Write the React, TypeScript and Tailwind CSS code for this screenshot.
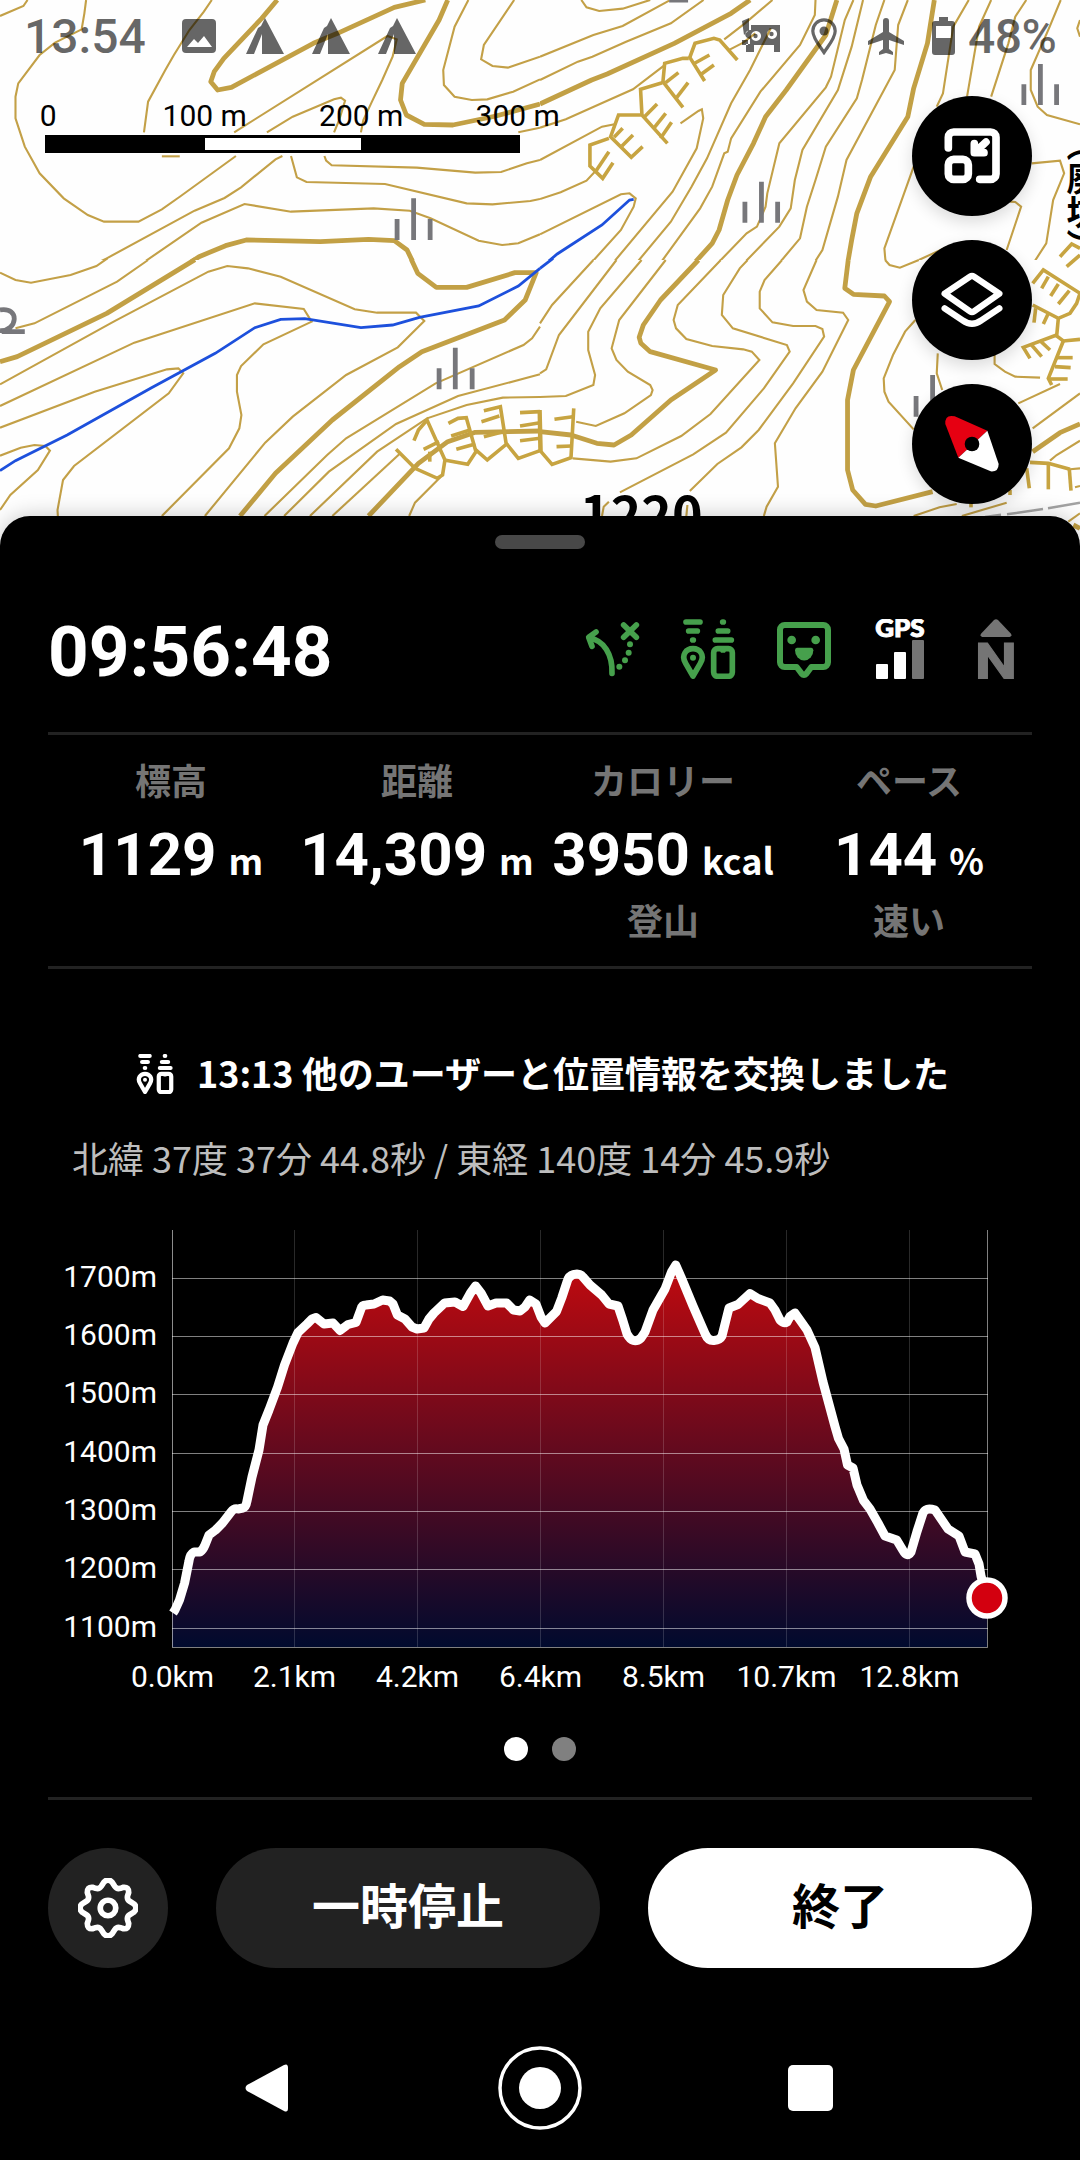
import type { ReactNode } from 'react';

type MapTile = {
    transform: string;
    clip?: string;
    thin: string[];
    bold?: string[];
    cliff?: string[];
    stream?: string;
    symbols?: string[];
};

// Each tile has its own unit grid, scaled down onto the map
const TILES: MapTile[] = [
    {
        transform: 'translate(0 0) scale(.34439 .33333)',
        clip: 'url(#upper-row)',
        thin: [
            '0,48 68,18 80,0',
            '250,0 245,40 237,88 160,128 115,165 53,250 45,290 45,355 72,440 115,520 185,595 255,645 302,665 402,665 470,628 525,588 685,468',
            '680,397 1125,108 1152,118 1140,170 1110,240 1080,305 1055,360 1048,397',
            '615,0 592,35 550,90 505,165 480,210 430,305 418,397',
            '470,469 522,469',
            '775,397 850,350 970,298 990,293 1002,302 985,360 970,397',
            '240,810 310,775 565,632 652,594 700,562 800,478 820,468',
            '385,810 585,668 710,612 845,635 1085,625 1190,632 1250,655 1390,722 1458,735 1505,730 1568,703',
            '845,468 862,532 890,546 1118,552 1355,610 1430,613 1540,603 1568,597',
            '942,468 947,482 963,496 1210,503 1380,518 1455,516 1530,490 1568,480',
            '1360,0 1320,80 1287,210 1289,255 1320,290 1370,300 1415,298 1490,275 1568,238',
            '1493,0 1405,135 1397,178 1430,198 1475,203 1568,170',
            '1505,397 1568,383',
        ],
        bold: [
            '805,0 760,55 650,175 622,215 612,245 632,270 672,262 910,130 980,100 1145,22 1235,0',
            '520,810 578,770 655,737 715,720 930,725 1070,718 1145,722 1182,750 1210,810',
            '1300,0 1275,60 1168,250 1163,300 1180,345 1232,373 1315,375 1440,348 1568,312',
        ],
        symbols: ['M1153 657V720M1201 595V720M1249 657V720'],
    },
    {
        transform: 'translate(540 0) scale(.34439 .33333)',
        clip: 'url(#upper-row)',
        thin: [
            '0,170 155,105 240,78 375,2',
            '120,0 135,22 172,33 240,26 320,0',
            '0,240 110,185 152,170 250,125 380,70 475,0',
            '0,383 75,358 200,300 270,268 360,197',
            '0,480 180,380 220,372',
            '0,597 60,577 135,542 162,512',
            '535,118 595,70 675,0',
            '545,152 590,128 625,100',
            '0,703 235,583 260,580 278,595 272,620 235,690 130,810',
            '408,370 460,333 470,328 474,355 455,445 385,575 195,810',
            '670,85 610,210 555,310 485,475 440,560 380,665 265,808',
            '800,0 798,45 755,135 640,275 555,415 545,455 535,460 500,560 465,625 335,810',
            '910,0 885,60 845,230 830,262 695,430 660,580 655,620 630,680 600,700 497,810',
            '938,0 905,140 865,270 762,450 740,540 728,625 695,680 573,810',
            '1000,0 975,75 935,240 920,295 830,440 800,540 775,620 755,715 678,810',
            '1068,0 1040,75 1030,210 890,480 865,590 820,750 783,810',
            '1245,0 1200,80 1170,280 1152,320',
            '1310,0 1275,80 1240,290',
            '1412,0 1380,50 1360,130 1310,290',
            '1512,0 1480,80 1425,210 1425,270 1445,320 1472,345 1568,373',
            '1085,500 1000,745 1002,770 1003,780',
            '1100,780 1190,737',
            '1428,490 1510,482 1522,520 1490,600 1470,730 1420,810',
            '1365,605 1380,606 1397,620 1355,750',
            '1568,60 1560,85 1568,110',
        ],
        bold: [
            '0,312 150,240 195,222 390,130 555,40 610,0',
            '862,0 830,105 715,270 655,350 620,430 572,525 545,600 520,690 500,730 430,810',
            '1145,0 1125,130 1085,265 1068,350 960,530 920,640 905,720 890,810',
        ],
        cliff: [
            '573,180 522,120 505,115 450,130 435,172 478,243',
            '445,192 492,165',
            '465,225 505,195',
            '432,175 415,175 362,190 357,245 415,322',
            '365,248 402,218',
            '395,295 430,248',
            '355,248 292,268 296,345 370,430',
            '302,352 340,312',
            '330,385 365,340',
            '350,415 382,367',
            '293,345 228,345 205,410 265,472 298,440',
            '215,412 240,385',
            '238,438 270,405',
            '200,415 145,435 145,498 182,535 212,488',
            '163,512 200,455',
        ],
        stream: '0,805 50,762 180,675 260,600 272,598',
        symbols: ['M595 605V668M643 545V668M690 605V668M1405 253V315M1453 192V315M1500 253V315M375 0H430'],
    },
    {
        transform: 'translate(0 260) scale(.34439 .33333)',
        thin: [
            '0,38 45,60 90,68 205,45 280,18 312,-5',
            '45,205 100,190 340,65 430,0',
            '0,373 330,185 605,35 660,18 720,25 815,50 1030,148 1095,158 1208,158 1232,183 1155,262 1005,345 850,470 770,548 595,768',
            '0,438 390,248 740,130 882,147 905,185 765,253 700,318 688,345 688,395 701,465 695,505 665,565 470,768',
            '0,503 275,395 485,328 518,325 532,340 490,400 215,618 183,660 167,750 168,768',
            '0,587 60,563 100,555 132,558 145,572 110,630 30,705 0,750',
            '1568,200 1545,235 1520,255 1265,370 1005,535 950,585 768,768',
            '1568,343 1330,408 1150,492 955,635 825,768',
            '1568,411 1460,413 1355,435 1240,475 1095,575 900,768',
            '1160,582 965,768',
            '1280,650 1205,728 1188,768',
        ],
        bold: [
            '0,305 50,290 310,160 566,-1',
            '1194,-2 1213,40 1267,82 1355,82 1495,38 1557,38 1525,120 1465,180 1225,275 1160,320 965,480 800,640 697,768',
            '1070,768 1215,610 1300,545 1380,517 1568,513',
        ],
        cliff: [
            '1150,568 1205,625 1270,655 1285,645 1292,600 1240,480 1215,510 1202,542',
            '1230,568 1275,545',
            '1248,605 1248,575',
            '1290,600 1358,613 1382,575 1354,473 1330,475 1302,490',
            '1310,528 1365,510',
            '1325,568 1380,552',
            '1380,568 1415,600 1470,553 1453,440 1405,452',
            '1398,485 1450,468',
            '1405,530 1455,517',
            '1470,550 1505,595 1568,572',
            '1510,458 1568,455',
            '1510,498 1568,488',
            '1510,542 1568,535',
            '1566,450 1568,570',
        ],
        stream: '0,632 45,602 195,525 440,383 625,280 740,203 815,178 885,176 1048,203 1140,195 1218,172 1390,138 1505,78 1568,25',
        symbols: ['M1275 325V388M1322 263V388M1371 325V388', 'M0 150C60 140 50 215 0 212M5 215H72'],
    },
    {
        transform: 'translate(540 260) scale(.34439 .33333)',
        thin: [
            '0,190 35,135 155,0',
            '0,340 18,328 55,225 222,0',
            '0,411 75,408 155,375 160,345 140,270 140,215 175,145 295,0',
            '365,0 230,180 208,265 222,300 255,335 320,375 327,390 322,405 245,460 162,498 105,485',
            '525,0 400,135 388,180 395,205 425,237 500,258 590,268 615,275 637,300 495,462 410,528 280,595 205,605 95,595',
            '603,0 580,25 532,105 528,165 560,205 717,255 725,275 650,385 540,518 445,583 232,697',
            '703,0 652,60 638,95 638,145 675,187 735,198 800,198 820,207 825,230 735,370 635,510 585,562 515,612 435,693',
            '803,0 765,90 775,125 803,150 880,158 895,180 820,335 742,445 682,550 691,680 658,740 650,768',
            '1002,0 1015,15 1045,23 1100,0',
            '1090,180 1060,215 1025,285 998,355 1000,395 1012,425 1085,508',
            '1155,280 1152,340 1168,390',
            '1320,285 1320,312 1350,335 1380,350 1452,353',
            '180,768 185,740 200,725',
            '428,735 425,768',
            '1085,768 1160,742 1210,732',
            '1225,768 1355,728',
        ],
        bold: [
            '0,515 90,525 165,550 215,555 265,525 380,420 510,330 320,275 293,250 288,232 300,195 350,120 460,0',
            '895,0 885,85 910,103 1000,108 1015,125 910,330 893,420 893,630 908,690 945,733 975,738 1140,695',
        ],
        cliff: ['0,450 3,575 35,613 90,593 98,445', '42,478 95,470', '48,560 92,558'],
        stream: '0,25 38,-5',
        symbols: ['M1092 408V470M1140 345V470'],
    },
    {
        transform: 'translate(900 120) scale(.33333)',
        thin: [
            '355,850 480,792',
            '398,925 540,820',
            '450,1022 470,1005 540,962',
            '510,1048 540,1045',
            '505,1205 540,1180',
            '525,1102 540,1098',
        ],
        bold: ['398,995 480,938 540,912', '520,1215 540,1225'],
        cliff: [
            '390,1027 445,1030 510,1048',
            '380,1045 388,1105',
            '445,1030 445,1108',
            '508,1048 513,1112',
            '480,410 515,372 540,385',
            '500,440 540,405',
            '398,490 430,450 540,520 530,550 510,580 475,595 398,555',
            '425,505 445,470',
            '452,528 475,492',
            '475,552 508,512',
            '402,608 407,565',
            '430,612 444,582',
            '475,595 470,648 490,663 540,658',
            '470,645 370,682 390,715',
            '392,672 425,710',
            '420,662 450,690',
            '490,663 445,775 455,795',
            '470,713 518,713',
            '465,740 512,743',
            '445,777 503,777',
            '213,1150 213,1162',
            '330,1110 330,1125',
        ],
    },
];

function TopoMap() {
    return (
        <svg className="absolute inset-0" width="1080" height="546" viewBox="0 0 1080 546" fill="none">
            <clipPath id="upper-row">
                <rect width="1568" height="780" />
            </clipPath>
            {TILES.map((tile) => (
                <g key={tile.transform} transform={tile.transform} clipPath={tile.clip}>
                    {tile.thin.map((p) => (
                        <polyline key={p} points={p} stroke="#c3a047" strokeWidth="2.1" vectorEffect="non-scaling-stroke" />
                    ))}
                    {tile.bold?.map((p) => (
                        <polyline key={p} points={p} stroke="#c2a045" strokeWidth="4.8" strokeLinejoin="round" vectorEffect="non-scaling-stroke" />
                    ))}
                    {tile.cliff?.map((p) => (
                        <polyline key={p} points={p} stroke="#c7a441" strokeWidth="3.6" vectorEffect="non-scaling-stroke" />
                    ))}
                    {tile.stream && (
                        <polyline points={tile.stream} stroke="#1d50dc" strokeWidth="2.8" vectorEffect="non-scaling-stroke" />
                    )}
                    {tile.symbols?.map((d) => (
                        <path key={d} d={d} stroke="#77777b" strokeWidth="4.8" vectorEffect="non-scaling-stroke" />
                    ))}
                </g>
            ))}
            <path d="M985 517L1001 514.7M1007 514.3L1043 509M1048 508.3L1080 502.7" stroke="#a3a3a3" strokeWidth="2.4" />
        </svg>
    );
}

function Tent() {
    return (
        <svg className="ml-[28px]" width="38" height="36" viewBox="0 0 38 36" fill="currentColor">
            <path d="M15 8L19 0L38 36H16V16L8 36H0L12 10Z" />
        </svg>
    );
}

function StatusBar() {
    return (
        <div className="absolute inset-x-0 top-0 flex h-[72px] items-center px-[24px] text-black/60">
            <span className="w-[121px] pt-[2px] text-[48px] leading-none font-medium">13:54</span>
            <svg className="ml-[37px]" width="34" height="34" viewBox="0 0 34 34" fill="currentColor" fillRule="evenodd">
                <path d="M4 0H30a4 4 0 0 1 4 4V30a4 4 0 0 1-4 4H4a4 4 0 0 1-4-4V4a4 4 0 0 1 4-4ZM5 28H30L22 17L16 24L12 20Z" />
            </svg>
            <div className="ml-[2px] flex">
                <Tent />
                <Tent />
                <Tent />
            </div>
            <div className="ml-auto flex items-center">
                <svg width="38" height="36" viewBox="0 0 38 36" fill="currentColor" fillRule="evenodd">
                    <path d="M0 3L7 0V12L2 17ZM0 22H6V27H0ZM9 7H38V34H32V27H12V34H4V26H8V21C1 20 2 12 9 12ZM14 13a5 5 0 1 0 .1 0ZM30 11a5 5 0 1 0 .1 0Z" />
                    <circle cx="13.5" cy="18" r="2.2" />
                    <circle cx="29.5" cy="16" r="2.2" />
                </svg>
                <svg className="ml-[31px]" width="26" height="37" viewBox="0 0 26 37" fill="none" stroke="currentColor" strokeWidth="3.2">
                    <path d="M13 34.5C8 27 1.8 20 1.8 13a11.2 11.2 0 0 1 22.4 0C24.2 20 18 27 13 34.5Z" />
                    <circle cx="13" cy="13" r="4.5" fill="currentColor" stroke="none" />
                </svg>
                <svg className="ml-[31px]" width="36" height="37" viewBox="0 0 36 37" fill="currentColor">
                    <path d="M18 0a3 3 0 0 1 3 3V14L36 23V27L21 22V31L25 34V37L18 35L11 37V34L15 31V22L0 27V23L15 14V3a3 3 0 0 1 3-3Z" />
                </svg>
                <svg className="ml-[28px]" width="23" height="38" viewBox="0 0 23 38" fill="currentColor" fillRule="evenodd">
                    <path d="M7 0H16V4H20a3 3 0 0 1 3 3V35a3 3 0 0 1-3 3H3a3 3 0 0 1-3-3V7a3 3 0 0 1 3-3H7ZM4 9V21H19V9Z" />
                </svg>
                <span className="ml-[13px] w-[88px] pt-[2px] text-[48px] leading-none font-medium tracking-[-0.5px]">48%</span>
            </div>
        </div>
    );
}

function ScaleBar() {
    return (
        <div className="absolute left-[-30px] top-[97px]">
            <div className="grid grid-cols-4 w-[626px] text-center text-[30px] leading-[37px] text-black">
                {['0', '100 m', '200 m', '300 m'].map((label) => (
                    <span key={label}>{label}</span>
                ))}
            </div>
            <div className="ml-[75px] flex h-[20px] w-[475px] items-center bg-white">
                <div className="flex h-[18px] w-full justify-center bg-black py-[3px]">
                    <div className="w-[156px] bg-white" />
                </div>
            </div>
        </div>
    );
}

function MapButton({ label, children }: { label: string; children: ReactNode }) {
    return (
        <button aria-label={label} className="size-[120px] rounded-full bg-black shadow-[0_6px_16px_rgba(0,0,0,0.14)]">
            <svg width="120" height="120" viewBox="0 0 360 360" fill="none" stroke="#fff" strokeLinecap="round" strokeLinejoin="round">
                {children}
            </svg>
        </button>
    );
}

function ExchangeIcon({ size, stroke = 17 }: { size: number; stroke?: number }) {
    return (
        <svg width={size} height={size} viewBox="0 0 180 180" fill="none" stroke="currentColor" strokeWidth={stroke} strokeLinecap="round" strokeLinejoin="round">
            <path d="M24 9H66M32 36H58M44 63H46M134 9H136M121 36H149M112 63H160" />
            <path d="M45 171L23 133C8 108 25 89 45 89S82 108 67 133Z" />
            <circle cx="45" cy="116" r="9" fill="currentColor" stroke="none" />
            <rect x="107" y="89" width="56" height="83" rx="12" />
            <path d="M124 92H146L141 101H129Z" fill="currentColor" stroke="none" />
        </svg>
    );
}

function StatusIcons() {
    return (
        <div className="flex gap-[36px] text-[#46a04c]">
            <svg width="60" height="60" viewBox="0 0 180 180" fill="none" stroke="currentColor" strokeWidth="17" strokeLinecap="round" strokeLinejoin="round">
                <path d="M125 18L163 55M163 18L125 55" />
                <path d="M42 39L20 55L30 82M22 57C66 64 92 106 90 163" />
                <g fill="currentColor" stroke="none">
                    <circle cx="112" cy="143" r="9" />
                    <circle cx="129" cy="124" r="9" />
                    <circle cx="140" cy="101" r="9" />
                    <circle cx="144" cy="76" r="9" />
                </g>
            </svg>
            <ExchangeIcon size={60} />
            <svg width="60" height="60" viewBox="0 0 180 180" fill="none" stroke="currentColor" strokeWidth="18" strokeLinejoin="round">
                <path d="M32 18H148a14 14 0 0 1 14 14V130a14 14 0 0 1-14 14H112L97 164q-7 8-14 0L68 144H32a14 14 0 0 1-14-14V32a14 14 0 0 1 14-14Z" />
                <g fill="currentColor" stroke="none">
                    <circle cx="53" cy="63" r="13" />
                    <circle cx="125" cy="63" r="13" />
                    <path d="M69 86H112q6 0 6 8a27 30 0 0 1-55 0q0-8 6-8Z" />
                </g>
            </svg>
            <svg width="60" height="60" viewBox="0 0 180 180">
                <text x="16" y="53" fontSize="71" fontWeight="900" textLength="148" lengthAdjust="spacingAndGlyphs" fill="#fff" stroke="#fff" strokeWidth="3" className="font-[Lato,sans-serif]">GPS</text>
                <rect x="18" y="135" width="36" height="45" rx="3" fill="#fff" />
                <rect x="72" y="99" width="36" height="81" rx="3" fill="#fff" />
                <rect x="126" y="63" width="36" height="117" rx="3" fill="#757575" />
            </svg>
            <svg width="60" height="60" viewBox="0 0 180 180" fill="#757575">
                <path d="M84 3q6-5 12 0L135 44q4 8-4 10H49q-8-2-4-10Z" />
                <text x="26" y="180" fontSize="152" fontWeight="700" textLength="127" lengthAdjust="spacingAndGlyphs" stroke="#757575" strokeWidth="3">N</text>
            </svg>
        </div>
    );
}

const METRICS = [
    { label: '標高', value: '1129', unit: 'm' },
    { label: '距離', value: '14,309', unit: 'm' },
    { label: 'カロリー', value: '3950', unit: 'kcal', note: '登山' },
    { label: 'ペース', value: '144', unit: '%', note: '速い' },
];

const Y_TICKS = [
    { label: '1700m', y: 58.5 },
    { label: '1600m', y: 116.5 },
    { label: '1500m', y: 174.5 },
    { label: '1400m', y: 233.5 },
    { label: '1300m', y: 291.5 },
    { label: '1200m', y: 349.5 },
    { label: '1100m', y: 408.5 },
];

const X_TICKS = [
    { label: '0.0km', x: 124.5 },
    { label: '2.1km', x: 246.5 },
    { label: '4.2km', x: 369.5 },
    { label: '6.4km', x: 492.5 },
    { label: '8.5km', x: 615.5 },
    { label: '10.7km', x: 738.5 },
    { label: '12.8km', x: 861.5 },
];

const ELEVATION =
    'M125 393L127 390L131.5 380L136.6 363L141 341Q142 334 146 332L152 332Q155 330 157 325L161 315L167.6 310L174.5 303L183 292Q186 288 190 289L195 288Q198 287 199 281L204 257L211 230L215 205L221 190L229.6 167L236.5 145L245 123L250 112.5L259 104L264 99L268 97.5L276 104L285 103L292 110.5L300 104.5L308 102.5L313 89Q314 85 318 85L326 84L334.6 80L341.5 81L345 84L349.4 95L357 99L364 107L369 109L376 108L381 99L386 93L396.6 83L407 82L415 86.5L422.5 73L427.6 66L433 73L440 86L448 83L458.6 83L465.5 90L472 91L477 87L481.7 80L488 84L493 97L497 103L508.5 91.5L513.7 78L519 62Q521 54 529 54Q533 54 535 57L542 65L553.7 75L561 84L570 86L574.7 100L579 114Q585 125 593 118L597 112L605 90L617 69L623.7 51.5L627.7 45L633 57L645 86L657 113.5Q660 121 666 120.5Q672 120 674 116L678 100L681 88L690 84.5L702 73.5L710 78.5L722 83L727 90L732 100Q736 104 739 102L742 96.5L747 93L759 110L767 127.5L775 162L787 206.5L790.5 218.5L796 229L799.5 245L805 248L809 265L815.5 280.5L822 289L830 303L837 316L848.7 320L855 330.5Q859 338 863 332L869 311.5L875 293Q878 287 887 290L900 309L911 316L917 332L927 334L931 344L933 356L939 378';

function ElevationChart() {
    return (
        <svg className="mt-[29px] block" width="984" height="490" viewBox="0 0 984 490" fill="none">
            <defs>
                <linearGradient id="elevation" gradientUnits="userSpaceOnUse" x1="0" y1="45" x2="0" y2="427">
                    <stop offset="0" stopColor="#c00a0f" />
                    <stop offset="1" stopColor="#000a2e" />
                </linearGradient>
            </defs>
            <path d={`${ELEVATION}V427H124V393Z`} fill="url(#elevation)" />
            {X_TICKS.map(({ label, x }) => (
                <g key={label}>
                    <path d={`M${x} 10V427`} stroke="#fff" strokeOpacity={x === 124.5 ? 0.55 : 0.16} />
                    <text x={x} y="467" fontSize="30" textAnchor="middle" fill="#fff">{label}</text>
                </g>
            ))}
            {Y_TICKS.map(({ label, y }) => (
                <g key={label}>
                    <path d={`M124 ${y}H940`} stroke="#fff" strokeOpacity="0.5" />
                    <text x="109" y={y + 8.5} fontSize="30" textAnchor="end" fill="#fff">{label}</text>
                </g>
            ))}
            <path d="M124 427.5H939.5V10" stroke="#fff" strokeOpacity="0.5" />
            <path d={ELEVATION} stroke="#fff" strokeWidth="9" strokeLinejoin="round" />
            <circle cx="939" cy="378" r="18" fill="#d3000f" stroke="#fff" strokeWidth="5.5" />
        </svg>
    );
}

export default function App() {
    return (
        <div lang="ja" className="flex h-[2160px] w-[1080px] flex-col overflow-hidden bg-black font-[Roboto,'Noto_Sans_CJK_JP',sans-serif] text-white">
            <section className="relative h-[546px] shrink-0 overflow-hidden bg-[#fefefe]">
                <TopoMap />
                <span className="absolute left-[1066px] top-[127px] text-[34px] leading-[34px] font-bold text-black [writing-mode:vertical-rl] font-['Noto_Sans_CJK_JP',sans-serif]">（廃坑）</span>
                <span className="absolute left-[580px] top-[482px] text-[52px] leading-[60px] font-bold text-black font-['Noto_Sans_CJK_JP',sans-serif]">1220</span>
                <StatusBar />
                <ScaleBar />
                <div className="absolute right-[48px] top-[96px] flex flex-col gap-[24px]">
                    <MapButton label="縮小">
                        <g strokeWidth="23">
                            <path d="M109 156V124a16 16 0 0 1 16-16H236a16 16 0 0 1 16 16V234a16 16 0 0 1-16 16H203" />
                            <rect x="109" y="190" width="60" height="60" rx="16" />
                            <path d="M187 143V170H216M222 138L192 166" />
                        </g>
                    </MapButton>
                    <MapButton label="レイヤー">
                        <g strokeWidth="19">
                            <path d="M174 110q6-4 12 0L262 161L186 214q-6 4-12 0L98 161Z" />
                            <path d="M98 205L152 241q28 20 56 0L262 205" />
                        </g>
                    </MapButton>
                    <MapButton label="コンパス">
                        <g stroke="none">
                            <path d="M139 221L226 140L128 97Q98 90 100 120Z" fill="#e60012" />
                            <path d="M226 140L260 240Q260 264 236 262L139 221Z" fill="#fff" />
                            <circle cx="180" cy="180" r="22" fill="#000" />
                        </g>
                    </MapButton>
                </div>
            </section>

            <main className="relative -mt-[30px] flex flex-1 flex-col rounded-t-[30px] bg-black px-[48px] pt-[19px] shadow-[0_0_22px_rgba(0,0,0,0.22)]">
                <div className="h-[14px] w-[90px] shrink-0 self-center rounded-full bg-[#484848]" />

                <div className="mt-[40px] flex h-[120px] items-center justify-between pr-[6px]">
                    <span className="pt-[4px] text-[71px] leading-none font-bold">09:56:48</span>
                    <StatusIcons />
                </div>

                <div className="mt-[23px] grid h-[237px] grid-cols-4 border-y-[3px] border-[#222] pt-[24px] text-center whitespace-nowrap">
                    {METRICS.map(({ label, value, unit, note }) => (
                        <div key={label} className="flex flex-col items-center">
                            <span className="text-[36px] leading-[48px] font-bold text-[#757575]">{label}</span>
                            <div className="mt-[12px] flex h-[72px] items-baseline gap-[12px] leading-[72px]">
                                <span className="text-[60px] font-bold">{value}</span>
                                <span className="text-[36px] font-bold font-['Noto_Sans_CJK_JP',sans-serif]">{unit}</span>
                            </div>
                            <span className="mt-[8px] text-[36px] leading-[48px] font-bold text-[#757575]">{note}</span>
                        </div>
                    ))}
                </div>

                <div className="mt-[75px] flex h-[60px] items-center justify-center gap-[22px] pl-[4px] font-['Noto_Sans_CJK_JP',sans-serif]">
                    <ExchangeIcon size={40} stroke={19} />
                    <span className="pb-[4px] text-[36px] font-bold">13:13 他のユーザーと位置情報を交換しました</span>
                </div>
                <p className="mt-[23px] h-[64px] pl-[24px] text-[36px] leading-[60px] text-[#bdbdbd] font-['Noto_Sans_CJK_JP',sans-serif]">
                    北緯 37度 37分 44.8秒 / 東経 140度 14分 45.9秒
                </p>

                <ElevationChart />

                <div className="mt-[27px] flex justify-center gap-[24px]">
                    <span className="size-[24px] rounded-full bg-white" />
                    <span className="size-[24px] rounded-full bg-[#808080]" />
                </div>

                <div className="mt-[36px] h-[3px] bg-[#222]" />

                <div className="mt-[48px] flex h-[120px] gap-[48px] text-[48px] font-bold">
                    <button aria-label="設定" className="flex size-[120px] shrink-0 items-center justify-center rounded-full bg-[#222]">
                        <svg width="60" height="60" viewBox="1 1 58 58" fill="none" stroke="#fff" strokeWidth="5.5" strokeLinejoin="round">
                            <path d="M26 5q4-4 8 0l2.500 4q2 3 5.500 2l3-1q5-.5 5 5l-1 3q-1 3.500 2 5.500l4 2.500q4 4 0 8l-4 2.500q-3 2-2 5.500l1 3q0 5.500-5 5l-3-1q-3.500-1-5.500 2l-2.500 4q-4 4-8 0l-2.500-4q-2-3-5.500-2l-3 1q-5 .5-5-5l1-3q1-3.500-2-5.500l-4-2.500q-4-4 0-8l4-2.500q3-2 2-5.500l-1-3q0-5.500 5-5l3 1q3.500 1 5.500-2Z" />
                            <circle cx="30" cy="30" r="7.5" />
                        </svg>
                    </button>
                    <button className="flex-1 rounded-full bg-[#222]">一時停止</button>
                    <button className="flex-1 rounded-full bg-white text-black">終了</button>
                </div>

                <nav className="mt-[48px] grid h-[144px] grid-cols-[264px_1fr_264px] items-center px-[87px]">
                    <svg className="justify-self-center" width="44" height="48" viewBox="0 0 44 48" fill="#fff">
                        <path d="M2 21L39 1q4-2 4 3V44q0 5-4 3L2 27q-3-3 0-6Z" />
                    </svg>
                    <svg className="justify-self-center" width="84" height="84" viewBox="0 0 84 84">
                        <circle cx="42" cy="42" r="40" fill="none" stroke="#fff" strokeWidth="3.5" />
                        <circle cx="42" cy="42" r="21" fill="#fff" />
                    </svg>
                    <span className="mr-[6px] h-[46px] w-[45px] justify-self-center rounded-[5px] bg-white" />
                </nav>
            </main>
        </div>
    );
}
